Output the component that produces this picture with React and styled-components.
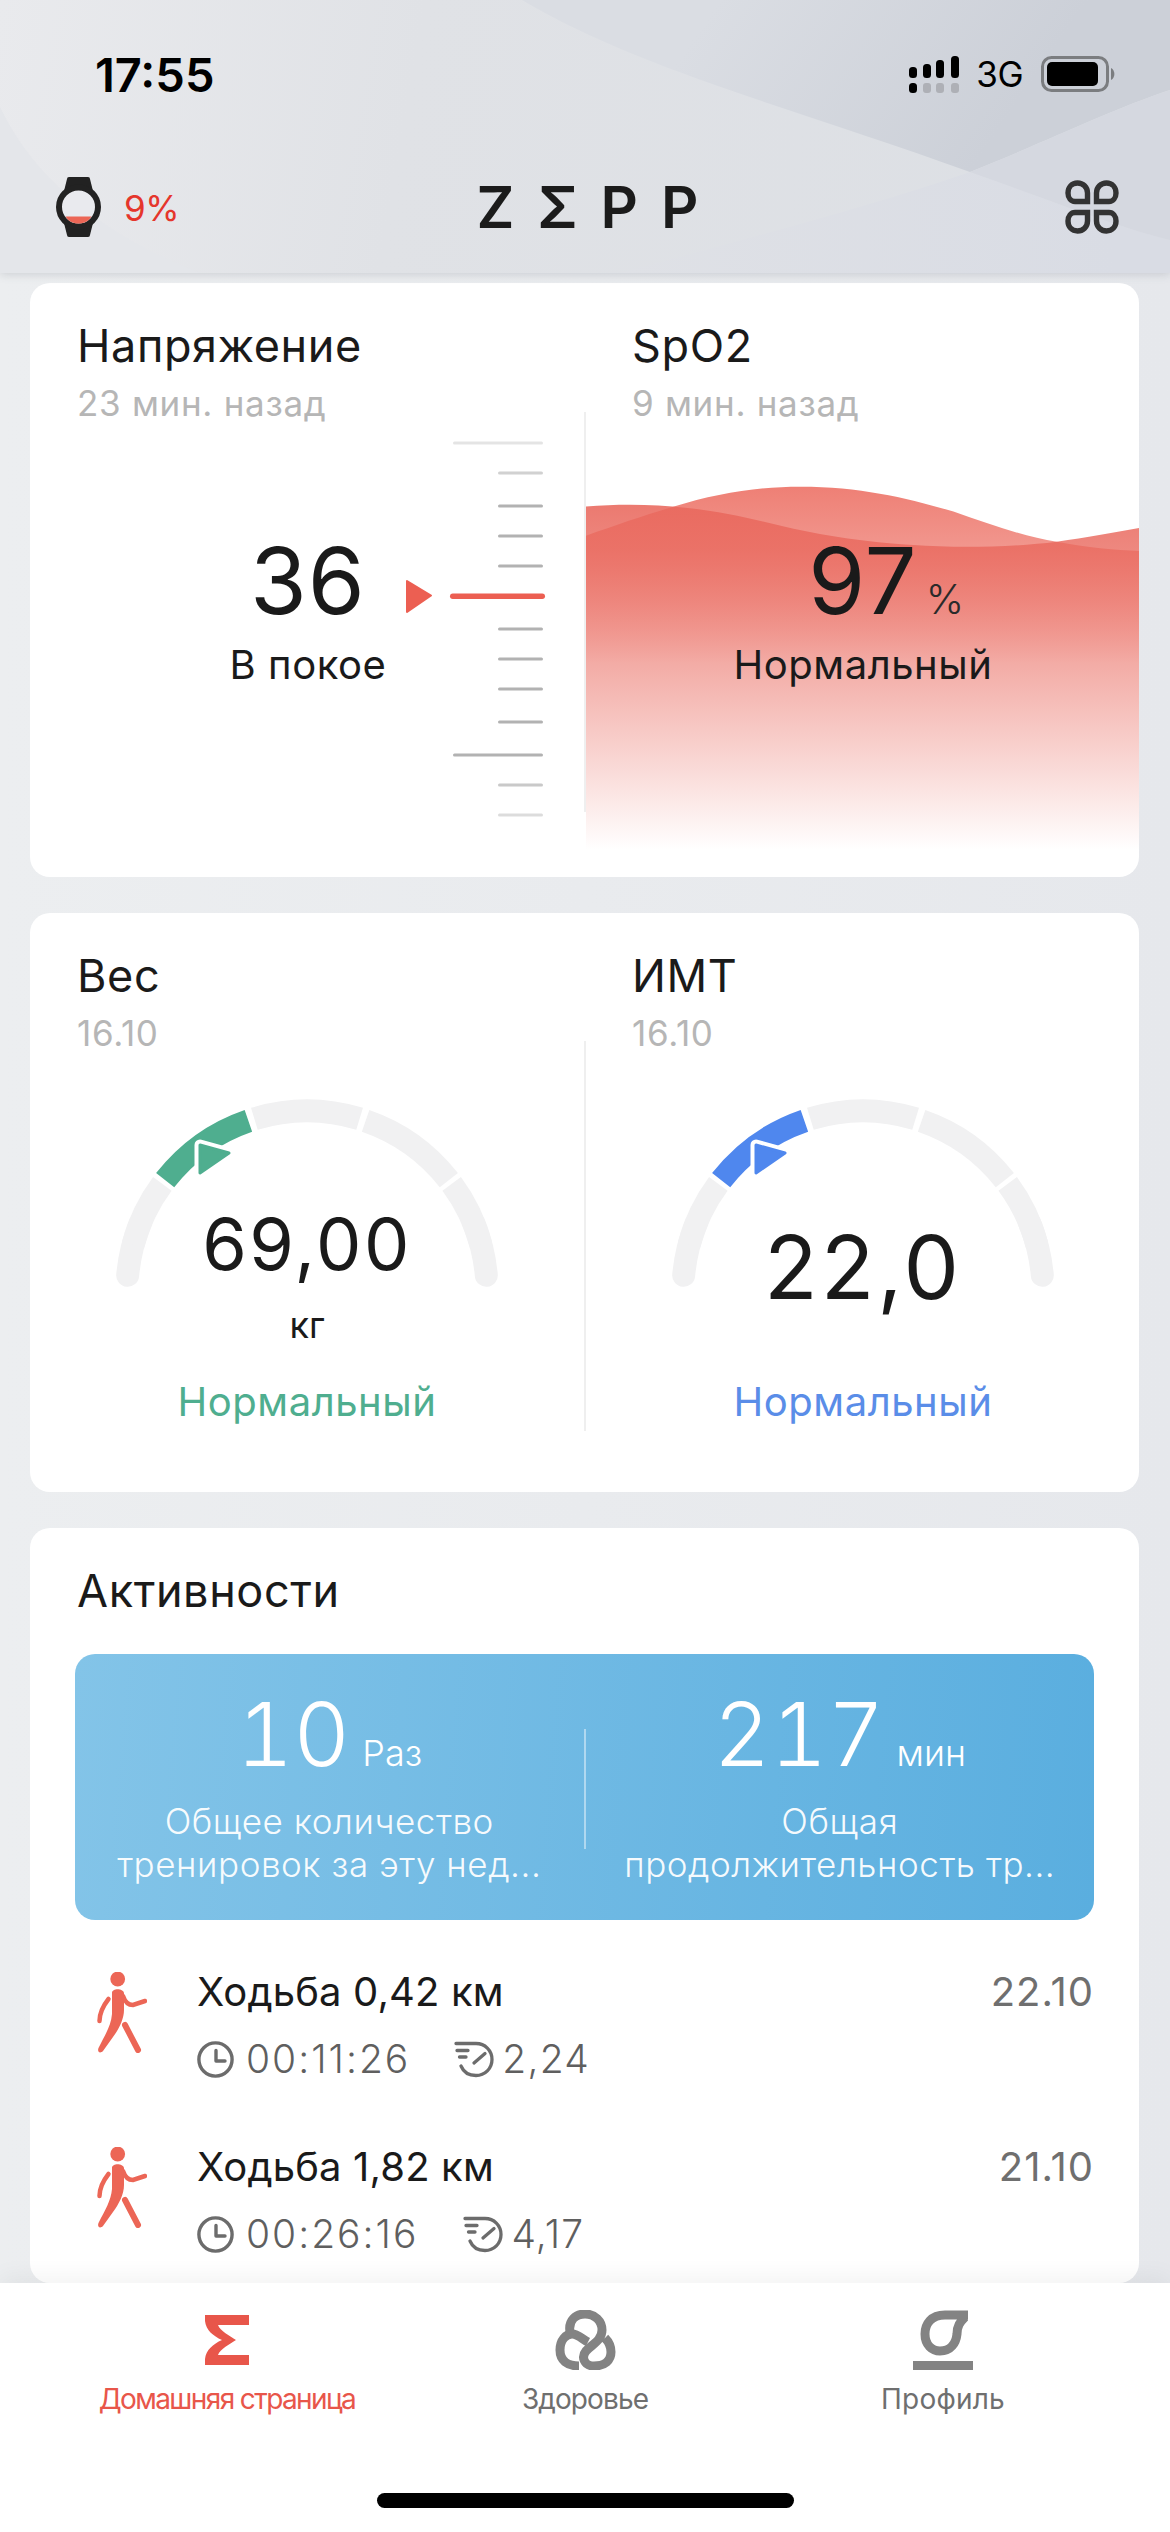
import React from "react";
import styled, { createGlobalStyle } from "styled-components";

const Global = createGlobalStyle`
  html, body { margin: 0; padding: 0; background: #e7e9ed; }
  * { box-sizing: border-box; }
  body { font-family: Inter, "Noto Sans", "Liberation Sans", sans-serif; color: #1a1a1a; }
`;

const Screen = styled.div`
  width: 1170px; height: 2532px; display: flex; flex-direction: column; overflow: hidden; background: #e7e9ed;
`;
const Header = styled.header`
  position: relative; z-index: 2; flex: 0 0 273px; height: 273px;
  background: linear-gradient(100deg, #e9eaed 0%, #e0e2e6 35%, #dcdfe4 100%);
  box-shadow: 0 1px 9px rgba(80, 85, 100, .22);
  overflow: hidden;
`;
const HeaderArt = styled.svg`
  position: absolute; inset: 0; width: 100%; height: 100%;
`;
const StatusBar = styled.div`
  position: relative; display: flex; justify-content: space-between; align-items: center;
  padding: 52px 54px 0 95px; height: 97px;
`;
const Time = styled.span`
  font-size: 47px; font-weight: 600; line-height: 44px; letter-spacing: 0; color: #000;
`;
const StatusIcons = styled.div`
  display: flex; align-items: center; gap: 16px; margin-top: -1px;
`;
const NetLabel = styled.span`
  font-size: 35px; line-height: 37px; font-weight: 400; letter-spacing: -.5px; color: #000; margin-right: 2px;
`;
const NavBar = styled.div`
  position: relative; display: grid; grid-template-columns: 1fr auto 1fr; align-items: center;
  padding: 0 51px 0 56px; margin-top: 80px;
`;
const WatchGroup = styled.div`
  display: flex; align-items: center; gap: 23px;
`;
const BatteryPct = styled.span`
  font-size: 35px; line-height: 40px; color: #e5362c; margin-top: 2px; letter-spacing: -.5px;
`;
const Logo = styled.div`
  font-size: 58px; line-height: 60px; font-weight: 600; letter-spacing: 23px; margin-right: -23px; color: #1b1b1b;
`;
const NavRight = styled.div`
  display: flex; justify-content: flex-end;
`;

const Content = styled.main`
  flex: 1 1 auto; min-height: 0; overflow: hidden; display: flex; flex-direction: column; gap: 36px;
  padding: 10px 31px 0 30px;
  background: linear-gradient(90deg, #eceef0, #e6e8ec 100%);
`;
const Card = styled.section`
  flex: 0 0 auto; background: #fff; border-radius: 20px; overflow: hidden;
`;
const SplitCard = styled(Card)`
  display: flex; height: ${(p) => p.$height}px;
`;
const Column = styled.div`
  position: relative; flex: 0 0 ${(p) => p.$width}px; padding-top: 36px; display: flex; flex-direction: column;
`;
const Divider = styled.div`
  flex: 0 0 2px; margin-top: ${(p) => p.$top}px; height: ${(p) => p.$height}px; background: #efefef;
`;
const Heading = styled.div`
  position: relative; padding-left: ${(p) => p.$inset}px;
`;
const Title = styled.h2`
  margin: 0; font-size: 45px; line-height: 54px; font-weight: 400; letter-spacing: .6px; color: #1a1a1a;
`;
const Sub = styled.div`
  margin-top: 9px; font-size: 35px; line-height: 42px; color: #b6b6b6; letter-spacing: .7px;
`;
const StressBody = styled.div`
  display: flex; align-items: flex-start; padding-left: 182px; margin-top: 16px;
`;
const CenterValue = styled.div`
  position: relative; flex: 0 0 ${(p) => p.$w || 192}px; display: flex; flex-direction: column; align-items: center;
  padding-top: ${(p) => p.$top}px;
`;
const BigNumber = styled.div`
  font-size: ${(p) => p.$size}px; line-height: ${(p) => p.$line}px; font-weight: 400; letter-spacing: ${(p) => p.$spacing || 0}px; color: #1a1a1a;
`;
const Caption = styled.div`
  margin-top: ${(p) => p.$top || 0}px; font-size: ${(p) => p.$size || 40}px; line-height: 48px; letter-spacing: ${(p) => p.$spacing ?? .55}px; color: ${(p) => p.$color || "#1a1a1a"};
`;
const PercentRow = styled.div`
  display: flex; align-items: baseline;
`;
const Percent = styled.span`
  font-size: 41px; font-weight: 300; width: 0; white-space: nowrap; margin-left: 8px; margin-right: -8px; color: #2a2a2a;
`;
const WaveArt = styled.svg`
  position: absolute; left: 0; top: 196px; width: 555px; height: 398px;
`;
const CenterBody = styled.div`
  position: relative; display: flex; flex-direction: column; align-items: center;
`;

const GaugeStack = styled.div`
  display: grid; justify-items: center; margin-top: ${(p) => p.$top}px; height: 282px;
`;
const GaugeArt = styled.svg`
  grid-area: 1 / 1; width: 400px; height: 210px;
`;
const GaugeText = styled.div`
  grid-area: 1 / 1; display: flex; flex-direction: column; align-items: center; padding-top: ${(p) => p.$top}px;
`;

const Activities = styled(Card)`
  padding: 36px 45px 0 45px; flex: 1 0 auto;
`;
const ActivityTitle = styled(Title)`
  padding-left: 2px;
`;
const Banner = styled.div`
  margin-top: 36px; height: 266px; border-radius: 20px; display: flex; align-items: center;
  background: linear-gradient(95deg, #83c4e8 0%, #5aaedf 100%); color: #fff;
`;
const BannerCol = styled.div`
  flex: 1 1 0; min-width: 0; display: flex; flex-direction: column; align-items: center; text-align: center;
`;
const BannerRule = styled.div`
  flex: 0 0 2px; height: 120px; background: rgba(255,255,255,.45); margin-top: 3px;
`;
const BannerValue = styled.div`
  display: flex; align-items: baseline; gap: 12px;
`;
const BannerNumber = styled.span`
  font-size: 88px; line-height: 92px; font-weight: 300; font-variant-numeric: tabular-nums;
`;
const BannerUnit = styled.span`
  font-size: 36px; font-weight: 300;
`;
const BannerLabel = styled.div`
  margin-top: 20px; font-size: 35px; line-height: 43px; color: rgba(255,255,255,.94); font-weight: 300; white-space: pre-line; letter-spacing: .55px;
`;
const Rows = styled.div`
  margin-top: 48px; display: flex; flex-direction: column; gap: 60px; padding-left: 22px;
`;
const Row = styled.div`
  display: flex; align-items: flex-start; gap: 50px;
`;
const RowIcon = styled.svg`
  flex: 0 0 50px; margin-top: 4px;
`;
const RowMain = styled.div`
  flex: 1 1 auto; min-width: 0;
`;
const RowHead = styled.div`
  display: flex; justify-content: space-between; align-items: center;
`;
const RowTitle = styled.div`
  font-size: 40px; line-height: 48px; letter-spacing: .15px; color: #1a1a1a;
`;
const RowDate = styled.div`
  font-size: 40px; line-height: 48px; letter-spacing: 1px; color: #6f6f6f;
`;
const RowStats = styled.div`
  display: flex; align-items: center; margin-top: 19px;
`;
const Stat = styled.div`
  display: flex; align-items: center; gap: ${(p) => p.$gap}px; margin-right: ${(p) => p.$after || 0}px;
`;
const StatText = styled.span`
  font-size: 39px; line-height: 48px; font-weight: 300; letter-spacing: ${(p) => p.$spacing}px; color: #5f5f5f;
`;

const TabBar = styled.nav`
  position: relative; z-index: 2; flex: 0 0 249px; height: 249px; background: #fff;
  box-shadow: 0 -6px 22px rgba(0,0,0,.05);
  display: grid; grid-template-columns: repeat(3, 358px); justify-content: center; padding-top: 27px; align-content: start;
`;
const Tab = styled.div`
  display: flex; flex-direction: column; align-items: center; color: ${(p) => p.$color};
`;
const TabIconBox = styled.div`
  height: 60px; display: flex; align-items: center; justify-content: center;
`;
const TabLabel = styled.div`
  margin-top: 11px; font-size: 28px; line-height: 36px; letter-spacing: ${(p) => p.$spacing}px; white-space: nowrap;
`;
const HomeIndicator = styled.div`
  position: absolute; left: 377px; bottom: 24px; width: 417px; height: 15px; border-radius: 8px; background: #000;
`;

const arc = (r, a, b, cx = 200, cy = 195) => {
  const p = (d) => {
    const t = (d * Math.PI) / 180;
    return [cx - r * Math.cos(t), cy - r * Math.sin(t)];
  };
  const [x1, y1] = p(a);
  const [x2, y2] = p(b);
  return `M${x1.toFixed(2)} ${y1.toFixed(2)}A${r} ${r} 0 0 1 ${x2.toFixed(2)} ${y2.toFixed(2)}`;
};

const Gauge = ({ color }) => {
  const segs = [[38, 71], [73, 107], [109, 142]];
  return (
    <GaugeArt viewBox="0 0 400 210">
      <path d={arc(180, 5, 22)} fill="none" stroke="#f1f1f2" strokeWidth="23" strokeLinecap="round" />
      <path d={arc(180, 15, 36.5)} fill="none" stroke="#f1f1f2" strokeWidth="23" />
      <path d={arc(180, 158, 175)} fill="none" stroke="#f1f1f2" strokeWidth="23" strokeLinecap="round" />
      <path d={arc(180, 143.5, 165)} fill="none" stroke="#f1f1f2" strokeWidth="23" />
      {segs.map(([a, b], i) => (
        <path key={i} d={arc(180, a, b)} fill="none" stroke={i === 0 ? color : "#f1f1f2"} strokeWidth="23" />
      ))}
      <path d="M93 49L122 57L93 77Z" fill="#fff" stroke="#fff" strokeWidth="11" strokeLinejoin="round" />
      <path d="M93 49L122 57L93 77Z" fill={color} stroke={color} strokeWidth="3" strokeLinejoin="round" />
    </GaugeArt>
  );
};

const ticks = [
  [3, 1, 0.35], [33, 0, 0.6], [66, 0, 1], [96, 0, 1], [126, 0, 1],
  [189, 0, 1], [219, 0, 1], [249, 0, 1], [282, 0, 1], [315, 1, 1], [345, 0, 0.7], [375, 0, 0.45],
];

const Ruler = () => (
  <svg width="144" height="378" viewBox="0 0 144 378">
    {ticks.map(([y, long, op]) => (
      <rect key={y} x={long ? 49 : 94} y={y - 1.5} width={long ? 90 : 45} height="3" rx="1.5" fill="#b2b2b2" opacity={op} />
    ))}
    <rect x="46" y="153.5" width="95" height="5.5" rx="2.75" fill="#ec5f52" />
    <path d="M3 141L27 155.5L3 172Z" fill="#ec5f52" stroke="#ec5f52" strokeWidth="2" strokeLinejoin="round" />
  </svg>
);

const Walker = () => (
  <RowIcon width="50" height="81" viewBox="0 0 50 81">
    <g fill="#ec6656">
      <circle cx="20.7" cy="7" r="7.4" />
      <path d="M15 21C15 16 26 16 27 21L27 38C27 47 22 57 16 65L6 79C3 82 0 80 1.5 76C8 63 14 54 15 42Z" />
    </g>
    <g fill="none" stroke="#ec6656" strokeLinecap="round">
      <path d="M28 53L41 78" strokeWidth="6" />
      <path d="M26 24C28 30 32 33 36 33L48 29" strokeWidth="4.5" />
      <path d="M11.5 27C6 34 2.5 42 2.5 49" strokeWidth="4.5" />
    </g>
  </RowIcon>
);

const Clock = () => (
  <svg width="37" height="37" viewBox="0 0 37 37" fill="none" stroke="#6c6c6c" strokeWidth="3.4" strokeLinecap="round" strokeLinejoin="round">
    <circle cx="18.5" cy="18.5" r="16.6" />
    <path d="M19 9.5V20H28" />
  </svg>
);

const Pace = () => (
  <svg width="40" height="37" viewBox="0 0 40 37" fill="none" stroke="#6c6c6c" strokeWidth="3.3" strokeLinecap="round">
    <path d="M2 2.5H22C31 2.5 38 9.5 38 18.5C38 27.5 31 34.5 22 34.5C15 34.5 9.5 31 7 25" />
    <path d="M3 9.5H14M5.5 16H12" />
    <path d="M20 22L31 12.5" />
  </svg>
);

const ActivityRow = ({ title, date, time, pace, gap }) => (
  <Row>
    <Walker />
    <RowMain>
      <RowHead>
        <RowTitle>{title}</RowTitle>
        <RowDate>{date}</RowDate>
      </RowHead>
      <RowStats>
        <Stat $gap={12} $after={gap}><Clock /><StatText $spacing={2}>{time}</StatText></Stat>
        <Stat $gap={8}><Pace /><StatText $spacing={1.2}>{pace}</StatText></Stat>
      </RowStats>
    </RowMain>
  </Row>
);

export default function App() {
  return (
    <Screen>
      <Global />
      <Header>
        <HeaderArt viewBox="0 0 1170 273" preserveAspectRatio="none">
          <defs>
            <linearGradient id="peak" gradientUnits="userSpaceOnUse" x1="720" y1="0" x2="970" y2="172">
              <stop offset="0" stopColor="#dadde3" />
              <stop offset="1" stopColor="#ccd0d8" />
            </linearGradient>
            <linearGradient id="low" gradientUnits="userSpaceOnUse" x1="620" y1="273" x2="1100" y2="180">
              <stop offset="0" stopColor="#dfe1e6" />
              <stop offset="1" stopColor="#d9dce4" />
            </linearGradient>
          </defs>
          <path d="M522 0C640 70 800 110 970 172C1050 140 1110 110 1170 90V0Z" fill="url(#peak)" />
          <path d="M620 273C740 240 860 210 970 172C1050 200 1110 225 1170 240V273Z" fill="url(#low)" />
          <path d="M970 172C1050 140 1110 110 1170 90V240C1110 225 1050 200 970 172Z" fill="#d5d8e0" />
          <path d="M0 107C30 170 90 230 200 273H0Z" fill="#e4e6ea" />
        </HeaderArt>
        <StatusBar>
          <Time>17:55</Time>
          <StatusIcons>
            <svg width="52" height="37" viewBox="0 0 52 37">
              <g fill="#000">
                <rect x="1" y="11" width="8" height="11" rx="3.5" />
                <rect x="15" y="8" width="8" height="14" rx="3.5" />
                <rect x="28" y="4" width="8" height="18" rx="3.5" />
                <rect x="43" y="0" width="8" height="22" rx="3.5" />
                <rect x="1" y="27" width="8" height="10" rx="3.5" />
              </g>
              <g fill="#aeb0b6">
                <rect x="15" y="27" width="8" height="10" rx="3" />
                <rect x="28" y="27" width="8" height="10" rx="3" />
                <rect x="43" y="27" width="8" height="10" rx="3" />
              </g>
            </svg>
            <NetLabel>3G</NetLabel>
            <svg width="75" height="36" viewBox="0 0 75 36">
              <rect x="1.5" y="1.5" width="65" height="33" rx="9" fill="none" stroke="#7b7d80" strokeWidth="3" />
              <rect x="6" y="6" width="51" height="24" rx="5" fill="#000" />
              <path d="M70 12C74.5 14 74.5 22 70 24Z" fill="#7b7d80" />
            </svg>
          </StatusIcons>
        </StatusBar>
        <NavBar>
          <WatchGroup>
            <svg width="45" height="60" viewBox="0 0 45 60">
              <path d="M11 2Q11 0 13 0H32Q34 0 34 2L37 14H8Z" fill="#222" />
              <path d="M11 58Q11 60 13 60H32Q34 60 34 58L37 46H8Z" fill="#222" />
              <circle cx="22.5" cy="30" r="19.5" fill="#e9eaee" stroke="#222" strokeWidth="6" />
              <path d="M9.5 39.5H35.5C33 44 28 46.5 22.5 46.5C17 46.5 12 44 9.5 39.5Z" fill="#ec6656" />
            </svg>
            <BatteryPct>9%</BatteryPct>
          </WatchGroup>
          <Logo>ZΣPP</Logo>
          <NavRight>
            <svg width="54" height="54" viewBox="0 0 54 54" fill="none" stroke="#333" strokeWidth="5.4">
              <path d="M3 13C3 7 7 3 12.5 3C18 3 22.5 7 22.5 13V21.5H10C6 21.5 3 18 3 13Z" />
              <path d="M51 13C51 7 47 3 41.5 3C36 3 31.5 7 31.5 13V21.5H44C48 21.5 51 18 51 13Z" />
              <path d="M3 41C3 47 7 51 12.5 51C18 51 22.5 47 22.5 41V32.5H10C6 32.5 3 36 3 41Z" />
              <path d="M51 41C51 47 47 51 41.5 51C36 51 31.5 47 31.5 41V32.5H44C48 32.5 51 36 51 41Z" />
            </svg>
          </NavRight>
        </NavBar>
      </Header>

      <Content>
        <SplitCard $height={594}>
          <Column $width={554}>
            <Heading $inset={47}>
              <Title>Напряжение</Title>
              <Sub>23 мин. назад</Sub>
            </Heading>
            <StressBody>
              <CenterValue $top={86}>
                <BigNumber $size={92} $line={110} $spacing={1}>36</BigNumber>
                <Caption $top={5}>В покое</Caption>
              </CenterValue>
              <Ruler />
            </StressBody>
          </Column>
          <Divider $top={129} $height={400} />
          <Column $width={554}>
            <WaveArt viewBox="40 520 1450 1040" preserveAspectRatio="none">
              <defs>
                <linearGradient id="back" gradientUnits="userSpaceOnUse" x1="0" y1="540" x2="0" y2="1000">
                  <stop offset="0" stopColor="#ec6e62" stopOpacity=".88" />
                  <stop offset=".35" stopColor="#ec6e62" stopOpacity=".72" />
                  <stop offset="1" stopColor="#ec6e62" stopOpacity="0" />
                </linearGradient>
                <linearGradient id="front" gradientUnits="userSpaceOnUse" x1="0" y1="590" x2="0" y2="1490">
                  <stop offset="0" stopColor="#e9685d" stopOpacity=".88" />
                  <stop offset=".45" stopColor="#e9685d" stopOpacity=".56" />
                  <stop offset=".73" stopColor="#e9685d" stopOpacity=".28" />
                  <stop offset="1" stopColor="#e9685d" stopOpacity="0" />
                </linearGradient>
              </defs>
              <path d="M40 668C120 640 200 612 270 592C380 558 490 540 600 540C760 540 880 570 1000 605C1100 640 1190 672 1270 684C1350 700 1430 706 1490 708V1490H40Z" fill="url(#back)" />
              <path d="M40 592C130 584 220 586 300 595C400 606 480 625 560 645C680 672 800 692 1000 697C1100 698 1190 694 1270 684C1350 672 1420 660 1490 647V1490H40Z" fill="url(#front)" />
            </WaveArt>
            <Heading $inset={46}>
              <Title>SpO2</Title>
              <Sub>9 мин. назад</Sub>
            </Heading>
            <CenterBody>
              <CenterValue $top={102} $w={554}>
                <PercentRow>
                  <BigNumber $size={92} $line={110} $spacing={1}>97</BigNumber>
                  <Percent>%</Percent>
                </PercentRow>
                <Caption $top={5}>Нормальный</Caption>
              </CenterValue>
            </CenterBody>
          </Column>
        </SplitCard>

        <SplitCard $height={579}>
          <Column $width={554}>
            <Heading $inset={47}>
              <Title>Вес</Title>
              <Sub>16.10</Sub>
            </Heading>
            <GaugeStack $top={42}>
              <Gauge color="#4fae8f" />
              <GaugeText $top={106}>
                <BigNumber $size={72} $line={84} $spacing={2.5}>69,00</BigNumber>
                <Caption $top={15} $size={36} $spacing={0}>кг</Caption>
              </GaugeText>
            </GaugeStack>
            <CenterBody>
              <Caption $color="#4fae8f">Нормальный</Caption>
            </CenterBody>
          </Column>
          <Divider $top={128} $height={390} />
          <Column $width={554}>
            <Heading $inset={46}>
              <Title>ИМТ</Title>
              <Sub>16.10</Sub>
            </Heading>
            <GaugeStack $top={42}>
              <Gauge color="#4f87ee" />
              <GaugeText $top={121}>
                <BigNumber $size={88} $line={100} $spacing={3}>22,0</BigNumber>
              </GaugeText>
            </GaugeStack>
            <CenterBody>
              <Caption $color="#5a8de8">Нормальный</Caption>
            </CenterBody>
          </Column>
        </SplitCard>

        <Activities>
          <ActivityTitle>Активности</ActivityTitle>
          <Banner>
            <BannerCol>
              <BannerValue>
                <BannerNumber>10</BannerNumber>
                <BannerUnit>Раз</BannerUnit>
              </BannerValue>
              <BannerLabel>{"Общее количество\nтренировок за эту нед..."}</BannerLabel>
            </BannerCol>
            <BannerRule />
            <BannerCol>
              <BannerValue>
                <BannerNumber>217</BannerNumber>
                <BannerUnit>мин</BannerUnit>
              </BannerValue>
              <BannerLabel>{"Общая\nпродолжительность тр..."}</BannerLabel>
            </BannerCol>
          </Banner>
          <Rows>
            <ActivityRow title="Ходьба 0,42 км" date="22.10" time="00:11:26" pace="2,24" gap={44} />
            <ActivityRow title="Ходьба 1,82 км" date="21.10" time="00:26:16" pace="4,17" gap={45} />
          </Rows>
        </Activities>
      </Content>

      <TabBar>
        <Tab $color="#e8564a">
          <TabIconBox>
            <svg width="44" height="50" viewBox="0 0 44 50" fill="#e8564a">
              <path d="M0 0H44V10H13C15 16 25 21 31 25C25 29 15 34 13 40H44V50H0V44C1 35 8 29 17 25C8 21 1 15 0 6Z" />
            </svg>
          </TabIconBox>
          <TabLabel $spacing={-1.6}>Домашняя страница</TabLabel>
        </Tab>
        <Tab $color="#6f6f6f">
          <TabIconBox>
            <svg width="61" height="60" viewBox="0 0 61 60" fill="none" stroke="#838383" strokeWidth="9">
              <path d="M15 22C13 10 21 4 30 4C40 4 47 11 47 20C47 31 36 35 31 41C26 47 29 56 39 56C50 56 56 50 56 42C56 36 54 32 50 28" />
              <path d="M24 56C12 56 5 50 5 40C5 30 11 24 17 24C23 24 27 29 33 32" />
            </svg>
          </TabIconBox>
          <TabLabel $spacing={-0.9}>Здоровье</TabLabel>
        </Tab>
        <Tab $color="#6f6f6f">
          <TabIconBox>
            <svg width="60" height="60" viewBox="0 0 60 60" fill="none" stroke="#838383" strokeWidth="9">
              <path d="M55 5H32C18 5 12 14 12 24C12 35 19 41 27 41C38 41 43 33 44 24C44 16 47 12 52 7" />
              <rect x="0" y="51" width="60" height="9" fill="#838383" stroke="none" />
            </svg>
          </TabIconBox>
          <TabLabel $spacing={0.2}>Профиль</TabLabel>
        </Tab>
        <HomeIndicator />
      </TabBar>
    </Screen>
  );
}
